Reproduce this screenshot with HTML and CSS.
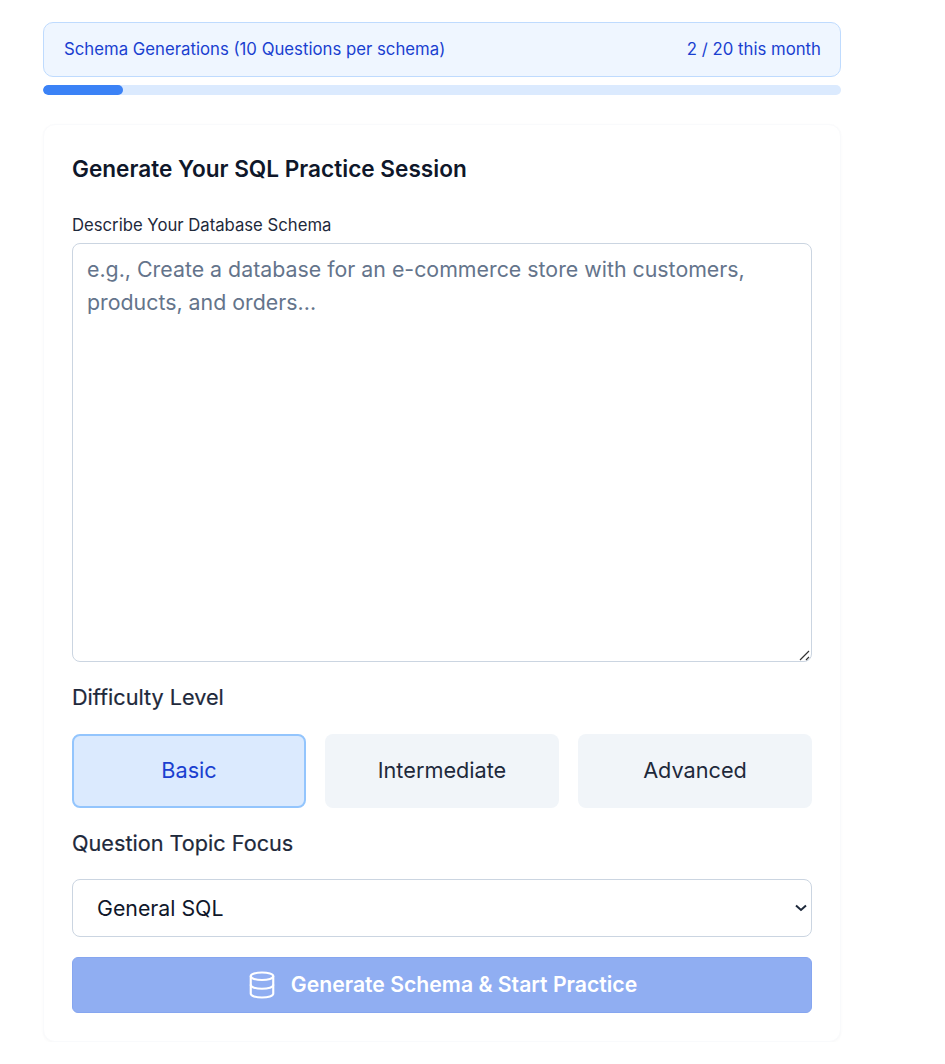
FILE: index.html
```html
<!DOCTYPE html>
<html lang="en">
<head>
<meta charset="utf-8">
<title>Generate Your SQL Practice Session</title>
<link rel="stylesheet" href="styles.css">
</head>
<body>
<main class="page">
  <div class="usage">
    <span>Schema Generations (10 Questions per schema)</span>
    <span>2 / 20 this month</span>
  </div>
  <div class="track"><div class="fill" style="width:10%"></div></div>
  <section class="card">
    <h2 class="title">Generate Your SQL Practice Session</h2>
    <label class="small-label" for="schema">Describe Your Database Schema</label>
    <textarea id="schema" class="schema" placeholder="e.g., Create a database for an e-commerce store with customers, products, and orders..."></textarea>
    <div class="field-label difficulty-label">Difficulty Level</div>
    <div class="levels">
      <button class="level active" type="button">Basic</button>
      <button class="level" type="button">Intermediate</button>
      <button class="level" type="button">Advanced</button>
    </div>
    <label class="field-label topic-label" for="topic">Question Topic Focus</label>
    <select id="topic" class="topic"><option>General SQL</option></select>
    <button class="generate" type="button">
      <svg class="db-icon" viewBox="0 0 24 24" fill="none" stroke="currentColor" stroke-width="1.7" stroke-linecap="round" stroke-linejoin="round"><ellipse cx="12" cy="5" rx="9" ry="3"/><path d="M3 5v14c0 1.66 4.03 3 9 3s9-1.34 9-3V5"/><path d="M3 12c0 1.66 4.03 3 9 3s9-1.34 9-3"/></svg>
      <span class="generate-text">Generate Schema &amp; Start Practice</span>
    </button>
  </section>
</main>
</body>
</html>
```

FILE: styles.css
```css
* { box-sizing: border-box; }
html, body { margin: 0; background: #fff; }
body { font-family: Inter, "Liberation Sans", sans-serif; color: #1e293b; }
.page { width: 798px; margin-left: 43px; padding-top: 22px; }
.usage {
  display: flex; justify-content: space-between; align-items: center;
  height: 55px; padding: 0 19px 2px 20px;
  background: #eff6ff; border: 1px solid #bfdbfe; border-radius: 10px;
  color: #1a3fd0; font-size: 16.75px; font-weight: 400;
}
.track { height: 10px; margin-top: 8px; background: #dbeafe; border-radius: 5px; overflow: hidden; }
.fill { height: 100%; background: #3b82f6; border-radius: 5px; }
.card {
  margin-top: 29px; height: 918px; padding: 28px;
  background: #fff; border: 1px solid #f9fafc; border-radius: 12px;
  box-shadow: 0 1px 3px rgba(15, 23, 42, 0.03);
  display: flex; flex-direction: column;
}
.title { margin: 0; font-size: 22.6px; line-height: 32px; font-weight: 600; color: #0f172a; }
.small-label { margin-top: 28px; font-size: 16.7px; line-height: 24px; font-weight: 400; color: #1e293b; }
.schema {
  display: block; width: 100%; height: 419px; margin-top: 6px; padding: 9px 14px;
  border: 1px solid #cbd5e1; border-radius: 8px; outline: 0; resize: vertical;
  font: 400 21.35px/33px Inter, sans-serif; color: #1e293b;
}
.schema::placeholder { color: #64748b; opacity: 1; }
.schema::-webkit-resizer {
  background: url("data:image/svg+xml,%3Csvg xmlns='http://www.w3.org/2000/svg' width='14' height='14'%3E%3Cpath d='M3 13L12 4M9 13L12 10' stroke='%23333' stroke-width='1.2' fill='none'/%3E%3C/svg%3E") no-repeat right bottom;
}
.field-label { font-size: 21.65px; line-height: 30px; font-weight: 400; color: #1e293b; -webkit-text-stroke: 0.2px #1e293b; }
.difficulty-label { margin-top: 20px; }
.levels { display: grid; grid-template-columns: repeat(3, 1fr); gap: 19px; margin-top: 22px; }
.level {
  height: 74px; padding: 0 0 2px; border: 2px solid transparent; border-radius: 8px;
  background: #f1f5f9; color: #1e293b;
  font: 400 21.7px Inter, sans-serif;
}
.level.active { background: #dbeafe; border-color: #93c5fd; color: #1a3fd0; }
.topic-label { margin-top: 20px; }
.topic {
  display: block; width: 100%; height: 58px; margin-top: 21px; padding: 0 24px;
  appearance: none;
  background: #fff url("data:image/svg+xml,%3Csvg xmlns='http://www.w3.org/2000/svg' width='12' height='8'%3E%3Cpath d='M1 1.5L6 6L11 1.5' stroke='%231e293b' stroke-width='2' fill='none'/%3E%3C/svg%3E") no-repeat right 4px center;
  border: 1px solid #cbd5e1; border-radius: 8px;
  font: 400 21.3px Inter, sans-serif; color: #0f172a;
}
.generate {
  display: flex; align-items: center; justify-content: center; gap: 14px;
  width: 100%; height: 56px; margin-top: 20px;
  background: #90aef2; border: 1px solid #86a6f0; border-radius: 6px;
  color: #fff; font: 600 21.2px Inter, sans-serif;
}
.generate-text { margin-bottom: 2px; }
.db-icon { width: 30px; height: 30px; }
```
